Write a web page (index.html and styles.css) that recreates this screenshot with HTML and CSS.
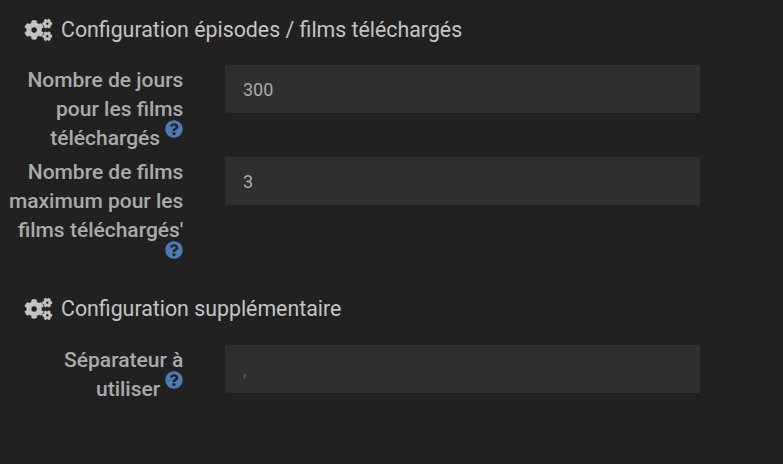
FILE: index.html
```html
<!DOCTYPE html>
<html lang="fr">
<head>
<meta charset="utf-8">
<title>Configuration</title>
<link rel="stylesheet" href="styles.css">
</head>
<body>
<svg class="defs" width="0" height="0">
  <symbol id="cogs" viewBox="0 0 640 512" overflow="visible"><path d="M512.1 191l-8.2 14.3c-3 5.300-9.400 7.500-15.100 5.400-11.800-4.400-22.600-10.700-32.100-18.600-4.600-3.800-5.800-10.500-2.800-15.700l8.200-14.300c-6.900-8-12.300-17.300-15.900-27.400h-16.500c-6 0-11.200-4.300-12.200-10.300-2-12-2.100-24.600 0-37.100 1-6 6.200-10.400 12.200-10.400h16.500c3.600-10.100 9-19.400 15.900-27.400l-8.200-14.300c-3-5.200-1.900-11.900 2.800-15.700 9.500-7.900 20.400-14.200 32.100-18.600 5.700-2.100 12.100.1 15.100 5.400l8.200 14.300c10.500-1.900 21.200-1.900 31.700 0L552 6.300c3-5.300 9.400-7.500 15.100-5.400 11.800 4.400 22.600 10.700 32.100 18.600 4.600 3.800 5.800 10.500 2.800 15.700l-8.200 14.300c6.900 8 12.300 17.300 15.900 27.400h16.500c6 0 11.200 4.300 12.200 10.300 2 12 2.100 24.600 0 37.100-1 6-6.200 10.400-12.200 10.400h-16.500c-3.600 10.100-9 19.400-15.900 27.400l8.200 14.300c3 5.200 1.900 11.900-2.800 15.700-9.500 7.900-20.400 14.200-32.100 18.600-5.700 2.100-12.100-.1-15.100-5.400l-8.200-14.300c-10.400 1.900-21.200 1.900-31.700 0zm-10.500-58.800c38.500 29.600 82.400-14.300 52.800-52.800-38.500-29.700-82.400 14.300-52.800 52.800zM386.300 286.100l33.700 16.800c10.100 5.800 14.500 18.100 10.500 29.100-8.900 24.200-26.400 46.400-42.600 65.800-7.400 8.900-20.200 11.100-30.300 5.300l-29.100-16.800c-16 13.700-34.600 24.600-54.900 31.700v33.600c0 11.600-8.300 21.600-19.700 23.600-24.600 4.200-50.400 4.400-75.900 0-11.500-2-20-11.900-20-23.600V418c-20.300-7.200-38.900-18-54.900-31.700L74 403c-10 5.800-22.900 3.600-30.300-5.300-16.200-19.400-33.300-41.600-42.200-65.700-4-10.900.4-23.200 10.500-29.100l33.300-16.800c-3.900-20.900-3.900-42.400 0-63.400L12 205.800c-10.100-5.800-14.600-18.100-10.500-29 8.900-24.200 26-46.400 42.200-65.800 7.400-8.900 20.200-11.100 30.300-5.300l29.100 16.800c16-13.700 34.600-24.600 54.900-31.700V57.100c0-11.500 8.200-21.500 19.600-23.500 24.600-4.200 50.500-4.400 76-.1 11.500 2 20 11.900 20 23.600v33.600c20.300 7.200 38.900 18 54.900 31.700l29.100-16.800c10-5.800 22.900-3.600 30.300 5.300 16.200 19.400 33.200 41.600 42.100 65.800 4 10.900.1 23.200-10 29.100l-33.700 16.800c3.900 21 3.900 42.500 0 63.500zm-117.600 21.100c59.200-77-28.700-164.900-105.700-105.700-59.200 77 28.700 164.900 105.700 105.700zm243.400 182.700l-8.200 14.300c-3 5.300-9.400 7.500-15.100 5.400-11.800-4.400-22.600-10.700-32.100-18.600-4.600-3.800-5.800-10.500-2.800-15.700l8.200-14.300c-6.900-8-12.300-17.300-15.900-27.400h-16.500c-6 0-11.200-4.300-12.200-10.300-2-12-2.100-24.600 0-37.100 1-6 6.200-10.400 12.200-10.400h16.500c3.600-10.100 9-19.400 15.900-27.400l-8.200-14.300c-3-5.200-1.900-11.900 2.800-15.700 9.500-7.900 20.400-14.200 32.100-18.600 5.700-2.100 12.100.1 15.100 5.400l8.200 14.300c10.500-1.900 21.200-1.900 31.700 0l8.200-14.300c3-5.300 9.400-7.500 15.100-5.400 11.800 4.400 22.600 10.700 32.100 18.600 4.600 3.800 5.800 10.500 2.800 15.700l-8.200 14.300c6.900 8 12.300 17.300 15.900 27.400h16.500c6 0 11.200 4.300 12.200 10.300 2 12 2.100 24.600 0 37.100-1 6-6.200 10.400-12.200 10.400h-16.500c-3.600 10.100-9 19.400-15.900 27.400l8.200 14.300c3 5.200 1.900 11.900-2.800 15.700-9.500 7.900-20.400 14.200-32.100 18.600-5.700 2.100-12.100-.1-15.100-5.400l-8.200-14.300c-10.400 1.900-21.200 1.900-31.700 0zM501.600 431c38.500 29.600 82.400-14.300 52.800-52.800-38.500-29.600-82.400 14.300-52.800 52.800z"/></symbol>
  <symbol id="help" viewBox="0 0 512 512"><path d="M504 256c0 136.997-111.043 248-248 248S8 392.997 8 256C8 119.083 119.043 8 256 8s248 111.083 248 248zM262.655 90c-54.497 0-89.255 22.957-116.549 63.758-3.536 5.286-2.353 12.415 2.715 16.258l34.699 26.310c5.205 3.947 12.621 3.008 16.665-2.122 17.864-22.658 30.113-35.797 57.303-35.797 20.429 0 45.698 13.148 45.698 32.958 0 14.976-12.363 22.667-32.534 33.976C247.128 238.528 216 254.941 216 296v4c0 6.627 5.373 12 12 12h56c6.627 0 12-5.373 12-12v-1.333c0-28.462 83.186-29.647 83.186-106.667 0-58.002-60.165-102-116.531-102zM256 338c-25.365 0-46 20.635-46 46 0 25.364 20.635 46 46 46s46-20.636 46-46c0-25.365-20.635-46-46-46z"/></symbol>
</svg>
<form>
  <fieldset>
    <h2><svg class="cogs"><use href="#cogs"/></svg>Configuration épisodes / films téléchargés</h2>
    <div class="row">
      <label for="days">Nombre de jours<br>pour les films<br>téléchargés <sup><svg class="help"><use href="#help"/></svg></sup></label>
      <input id="days" value="300">
    </div>
    <div class="row">
      <label for="max">Nombre de films<br>maximum pour les<br>films téléchargés'<br><sup><svg class="help"><use href="#help"/></svg></sup></label>
      <input id="max" value="3">
    </div>
  </fieldset>
  <fieldset class="extra">
    <h2><svg class="cogs"><use href="#cogs"/></svg>Configuration supplémentaire</h2>
    <div class="row">
      <label for="sep">Séparateur à<br>utiliser <sup><svg class="help"><use href="#help"/></svg></sup></label>
      <input id="sep" placeholder=",">
    </div>
  </fieldset>
</form>
</body>
</html>
```
FILE: styles.css
```css
* { box-sizing: border-box; }
body {
  margin: 0;
  height: 464px;
  overflow: hidden;
  background: #212121;
  color: #c4c4c4;
  font-family: Roboto, "Liberation Sans", sans-serif;
}
.defs { position: absolute; }
form { padding-top: 14px; }
fieldset { margin: 0; padding: 0; border: 0; min-width: 0; }
h2 {
  display: flex;
  align-items: center;
  gap: 9px;
  height: 31px;
  margin: 0 0 20px 25px;
  font-size: 21.33px;
  font-weight: 400;
}
.cogs { width: 27px; height: 22px; fill: currentColor; stroke: currentColor; stroke-width: 14px; overflow: visible; }
.row {
  display: grid;
  grid-template-columns: 183.4px 474.6px;
  column-gap: 42px;
  align-items: start;
  margin-bottom: 4px;
}
label {
  padding-top: 1px;
  color: #aaa;
  font-size: 21px;
  font-weight: 500;
  line-height: 29px;
  text-align: right;
  white-space: nowrap;
}
sup { font-size: 15px; line-height: 0; position: relative; top: -9px; vertical-align: baseline; }
.help { width: 18px; height: 18px; fill: #4d7ab3; vertical-align: -2px; }
input {
  width: 100%;
  height: 48px;
  margin-left: -0.4px;
  padding: 0 18px;
  border: 0;
  border-radius: 0;
  outline: 0;
  background: #2f2f2f;
  color: #aaa;
  font: 400 18px Roboto, "Liberation Sans", sans-serif;
}
input::placeholder { color: #666; opacity: 1; }
.extra { margin-top: 15px; }
.extra h2 { margin-bottom: 21px; }
```
